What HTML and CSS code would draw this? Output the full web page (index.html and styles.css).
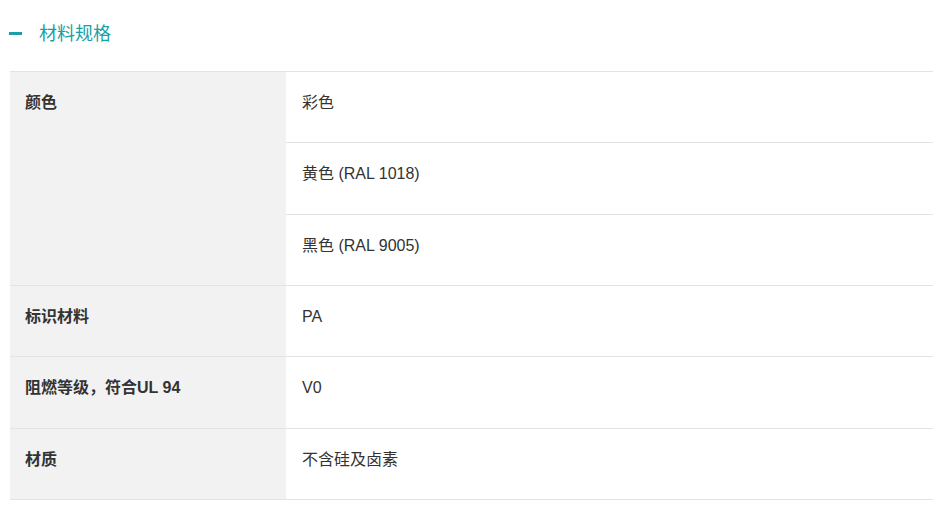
FILE: index.html
```html
<!DOCTYPE html>
<html lang="zh-CN">
<head>
<meta charset="utf-8">
<link rel="stylesheet" href="styles.css">
</head>
<body>
<div class="page">
  <div class="section-head">
    <span class="dash"></span>
    <span class="title">材料规格</span>
  </div>
  <table class="spec">
    <tr>
      <th rowspan="3">颜色</th>
      <td>彩色</td>
    </tr>
    <tr><td>黄色 (RAL 1018)</td></tr>
    <tr><td>黑色 (RAL 9005)</td></tr>
    <tr><th>标识材料</th><td>PA</td></tr>
    <tr><th>阻燃等级，符合UL 94</th><td>V0</td></tr>
    <tr><th>材质</th><td>不含硅及卤素</td></tr>
  </table>
</div>
</body>
</html>
```
FILE: styles.css
```css
html, body {
  margin: 0;
  padding: 0;
  background: #ffffff;
}
body {
  font-family: "Liberation Sans", "Noto Sans CJK SC", sans-serif;
  color: #333333;
}
.page {
  padding: 0 16px 0 10px;
}
.section-head {
  display: flex;
  align-items: center;
  height: 71px;
  box-sizing: border-box;
  padding-bottom: 4px;
}
.dash {
  display: block;
  width: 13px;
  height: 3px;
  background: #17a0a8;
  margin-left: -1px;
}
.title {
  margin-left: 17px;
  font-size: 18px;
  color: #17a0a8;
  line-height: 24px;
}
.spec {
  width: 100%;
  border-collapse: collapse;
  font-size: 16px;
  line-height: 22px;
}
.spec th, .spec td {
  border-top: 1px solid #e3e3e3;
  border-bottom: 1px solid #e3e3e3;
  text-align: left;
  vertical-align: top;
  height: 71.33px;
  box-sizing: border-box;
  padding: 20px 15px 27px;
}
.spec th {
  width: 276px;
  background: #f2f2f2;
  font-weight: bold;
}
.spec td {
  padding-left: 16px;
  font-weight: normal;
}
```
